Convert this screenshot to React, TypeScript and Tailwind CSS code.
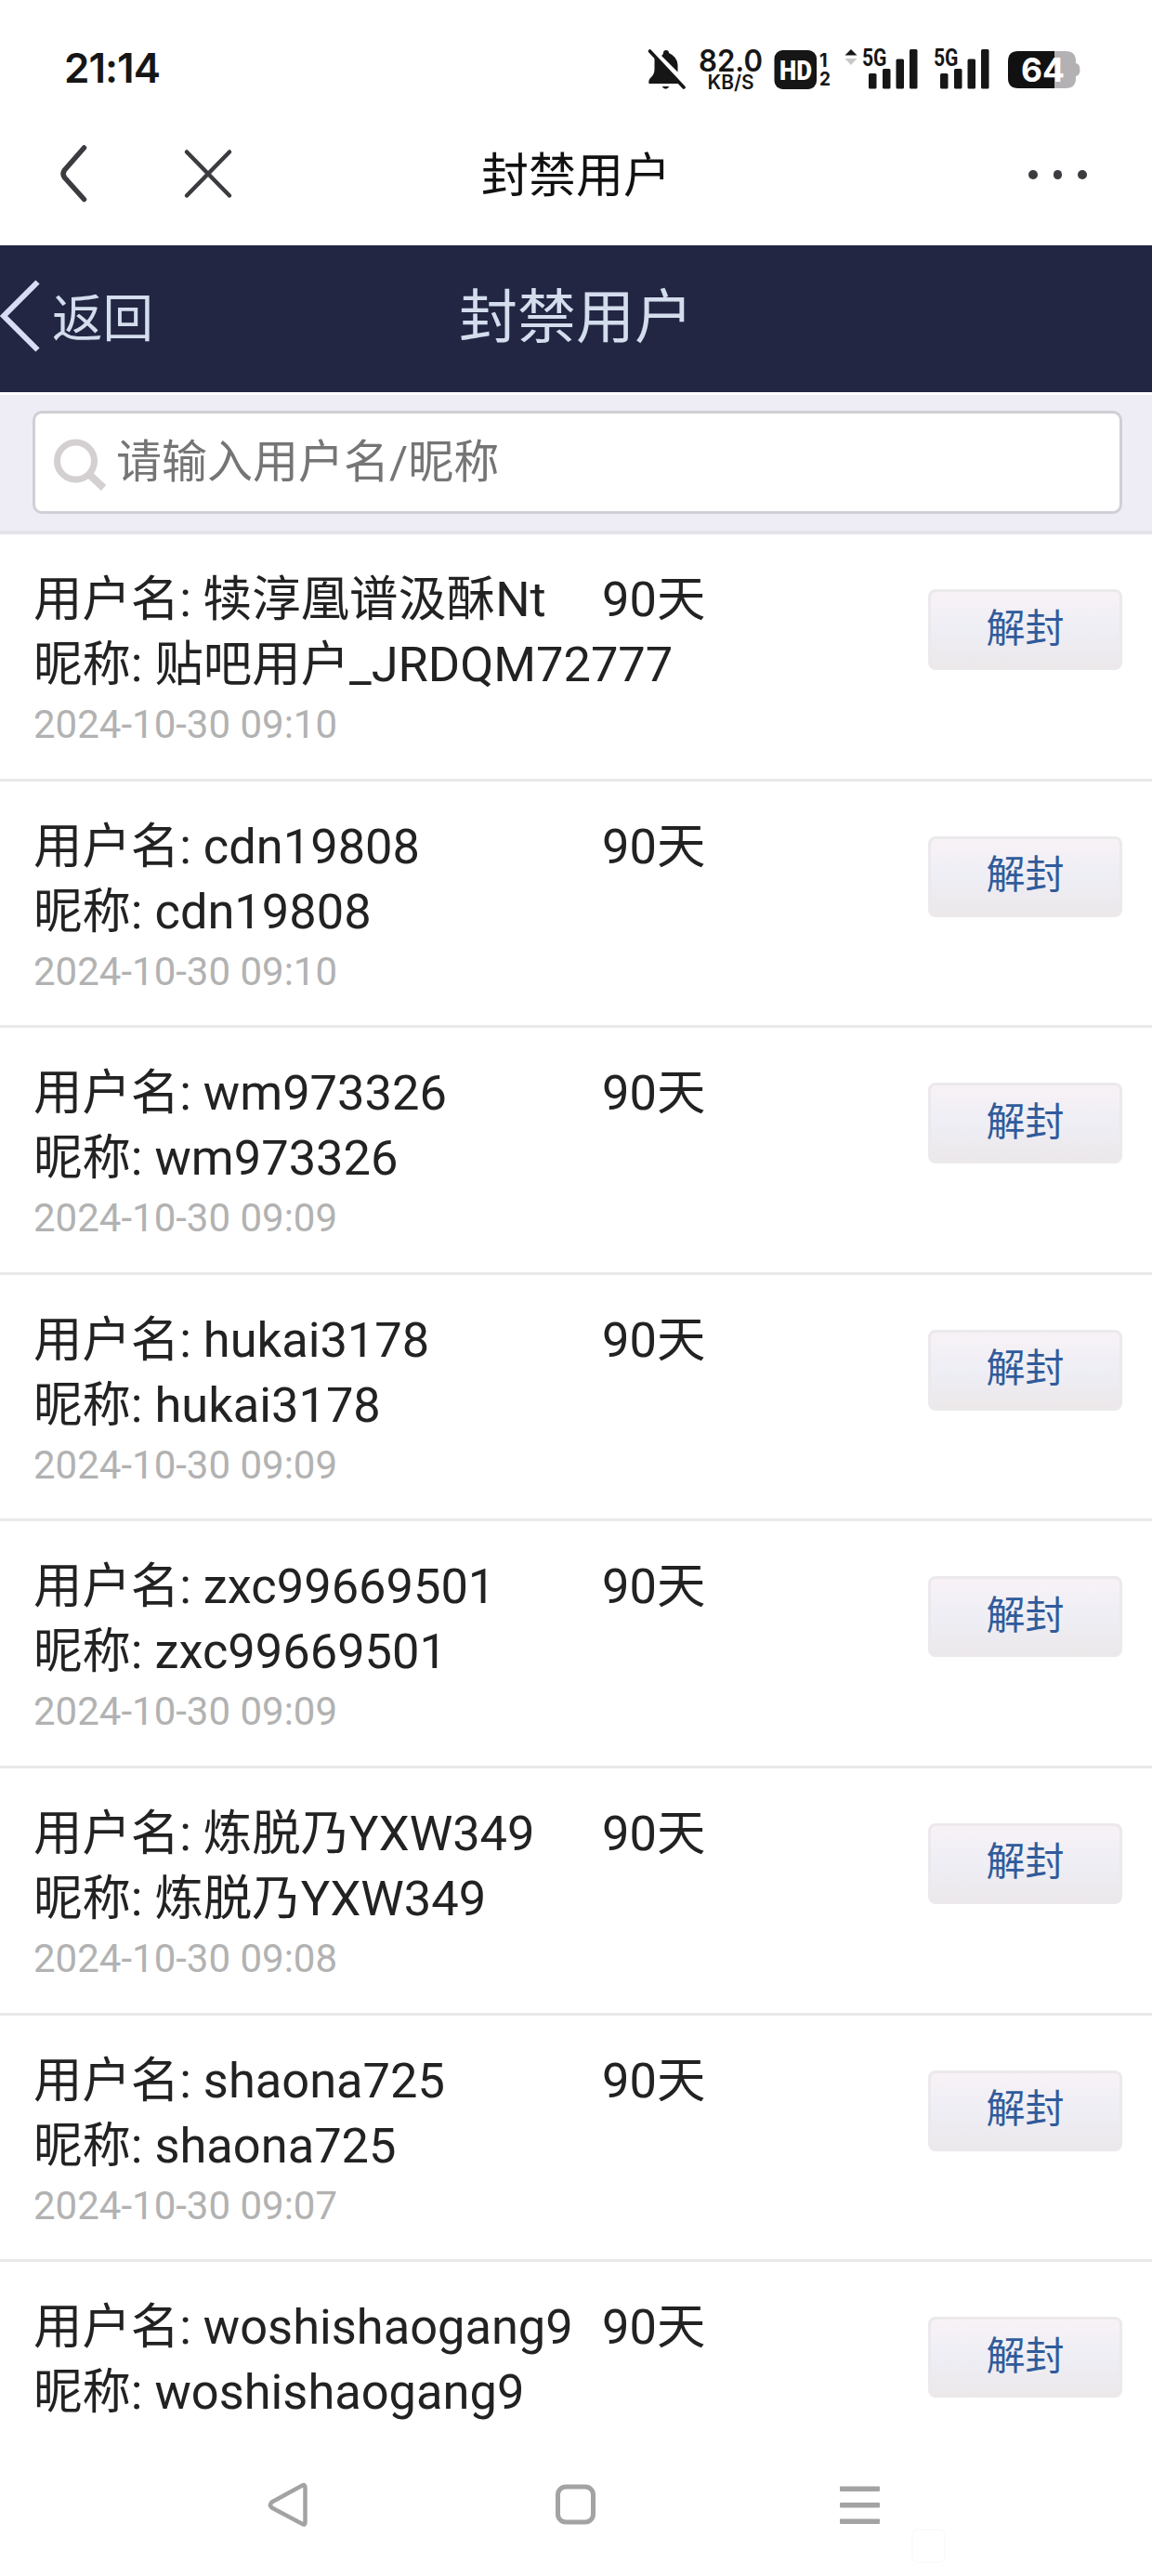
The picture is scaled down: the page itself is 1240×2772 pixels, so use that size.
const bannedUsers = [
  { username: "犊淳凰谱汲酥Nt", nickname: "贴吧用户_JRDQM72777", days: 90, time: "2024-10-30 09:10" },
  { username: "cdn19808", nickname: "cdn19808", days: 90, time: "2024-10-30 09:10" },
  { username: "wm973326", nickname: "wm973326", days: 90, time: "2024-10-30 09:09" },
  { username: "hukai3178", nickname: "hukai3178", days: 90, time: "2024-10-30 09:09" },
  { username: "zxc99669501", nickname: "zxc99669501", days: 90, time: "2024-10-30 09:09" },
  { username: "炼脱乃YXW349", nickname: "炼脱乃YXW349", days: 90, time: "2024-10-30 09:08" },
  { username: "shaona725", nickname: "shaona725", days: 90, time: "2024-10-30 09:07" },
  { username: "woshishaogang9", nickname: "woshishaogang9", days: 90, time: "" },
];

const BellOffIcon = () => (
  <svg className="h-[44px] w-[42px]" viewBox="0 0 42 44" fill="#161616">
    <path d="M7.500 8 L36 38 H1.500 Q0.500 34 4 31 Q7.500 28 7.500 22 Z" />
    <path d="M15 8 Q17 6.500 17 5 A3 3 0 0 1 23 5 Q32 9 32.500 18 V25.500 Z" />
    <path d="M15.500 41 H23.500 Q19.500 46.500 15.500 41 Z" />
    <path d="M2.500 3 L39 42" stroke="#161616" strokeWidth="3.600" strokeLinecap="round" />
  </svg>
);

const SignalIcon = ({ active }: { active?: boolean }) => (
  <svg className="h-[44px] w-[80px] overflow-visible" viewBox="0 0 80 44" fill="#161616">
    {active && (
      <>
        <path d="M8 1 L14.500 7.500 H1.500 Z" />
        <path d="M8 18 L14.500 11 H1.500 Z" fill="#c9c9c9" />
      </>
    )}
    <text
      x="20"
      y="18.500"
      fontSize="25"
      fontWeight="700"
      textLength="26.500"
      lengthAdjust="spacingAndGlyphs"
      className="font-['Roboto',sans-serif]"
    >
      5G
    </text>
    <rect x="27" y="27" width="8.500" height="16.500" rx="1.500" />
    <rect x="42" y="22" width="8.500" height="21.500" rx="1.500" />
    <rect x="56.500" y="11.500" width="8.500" height="32" rx="1.500" />
    <rect x="71" y="1" width="8.500" height="42.500" rx="1.500" />
  </svg>
);

const BatteryIcon = () => (
  <svg className="h-[40px] w-[78px] overflow-visible" viewBox="0 0 78 40">
    <path d="M50 0 H62 Q73 0 73 11 V13 Q77.500 14 77.500 20 Q77.500 26 73 27 V29 Q73 40 62 40 H50 Z" fill="#b4b1b4" />
    <path d="M50 0 H11 Q0 0 0 11 V29 Q0 40 11 40 H50 Z" fill="#111" />
    <text
      x="14"
      y="32.500"
      fontSize="36"
      fontWeight="700"
      fill="#fff"
      textLength="47"
      lengthAdjust="spacingAndGlyphs"
      className="font-['Inter',sans-serif]"
    >
      64
    </text>
  </svg>
);

const StatusBar = () => (
  <div className="flex h-[113px] items-end justify-between pr-[77px] pb-[17px] pl-[69px] text-[#161616]">
    <span className="font-['Inter',sans-serif] text-[44px] leading-[46px] font-semibold tracking-[-1px]">21:14</span>
    <div className="flex h-[44px] items-start">
      <BellOffIcon />
      <svg className="ml-[14px] h-[48px] w-[68px] overflow-visible" viewBox="0 0 68 48" fill="#161616">
        <text
          x="-1"
          y="24.500"
          fontSize="32"
          fontWeight="600"
          textLength="69"
          lengthAdjust="spacingAndGlyphs"
          className="font-['Inter',sans-serif]"
        >
          82.0
        </text>
        <text
          x="8.500"
          y="43.500"
          fontSize="21"
          fontWeight="600"
          textLength="50"
          lengthAdjust="spacingAndGlyphs"
          className="font-['Inter',sans-serif]"
        >
          KB/S
        </text>
      </svg>
      <svg className="ml-[12px] h-[44px] w-[62px] overflow-visible" viewBox="0 0 62 44" fill="#161616">
        <rect x="0.500" y="2" width="45.500" height="42" rx="9" />
        <text
          x="6"
          y="33.500"
          fontSize="29"
          fontWeight="900"
          fill="#fff"
          textLength="35"
          lengthAdjust="spacingAndGlyphs"
          className="font-['Roboto',sans-serif]"
        >
          HD
        </text>
        <text x="49" y="20" fontSize="20" fontWeight="700" className="font-['Inter',sans-serif]">
          1
        </text>
        <text
          x="49"
          y="40"
          fontSize="20"
          fontWeight="700"
          textLength="12"
          lengthAdjust="spacingAndGlyphs"
          className="font-['Inter',sans-serif]"
        >
          2
        </text>
      </svg>
      <div className="ml-[13px]">
        <SignalIcon active />
      </div>
      <div className="-ml-[3px]">
        <SignalIcon />
      </div>
      <div className="mt-[3px] ml-[20px]">
        <BatteryIcon />
      </div>
    </div>
  </div>
);

const AppBar = () => (
  <div className="flex h-[151px] items-start justify-between pr-[70px] pl-[62px]">
    <div className="flex w-[254px] items-center pt-[41px]">
      <svg className="h-[66px] w-[34px]" viewBox="0 0 34 66" fill="none" stroke="#3c3c40" strokeWidth="5.500" strokeLinecap="round">
        <path d="M28.500 5 L7.500 29 Q4.500 33 7.500 37 L28.500 60.500" />
      </svg>
      <svg className="ml-[100px] h-[56px] w-[56px]" viewBox="0 0 56 56" fill="none" stroke="#3c3c40" strokeWidth="4.500" strokeLinecap="round">
        <path d="M5 4.500 L51 51.500 M51 4.500 L5 51.500" />
      </svg>
    </div>
    <h1 className="mt-[40px] text-[51px] leading-[74px] text-[#111]">封禁用户</h1>
    <div className="flex w-[246px] justify-end gap-[17px] pt-[70px]">
      <span className="size-[9.5px] rounded-full bg-[#3c3c40]" />
      <span className="size-[9.5px] rounded-full bg-[#3c3c40]" />
      <span className="size-[9.5px] rounded-full bg-[#3c3c40]" />
    </div>
  </div>
);

const PageHeader = () => (
  <header className="flex h-[158px] items-center justify-between bg-[#222642] text-[#d3dded]">
    <div className="flex w-[300px] items-center">
      <svg className="mb-[6px] h-[78px] w-[45px]" viewBox="0 0 45 78" fill="none" stroke="#d8dcf4" strokeWidth="6">
        <path d="M40.500 2.500 L4 39 L40.500 75.500" />
      </svg>
      <span className="ml-[11px] text-[54.5px] leading-[60px]">返回</span>
    </div>
    <h2 className="pb-[3px] text-[63px] leading-[70px]">封禁用户</h2>
    <div className="w-[300px]" />
  </header>
);

const SearchBar = () => (
  <div className="mt-[3px] h-[150px] border-b-4 border-[#e4e3e9] bg-[#eeedf6] px-[35px] pt-[17px]">
    <div className="flex h-[111px] w-[1173px] items-center rounded-[10px] border-3 border-[#cfcfd5] bg-white pl-[20px]">
      <svg className="mt-[4px] h-[58px] w-[58px]" viewBox="0 0 58 58" fill="none" stroke="#d4d0d1">
        <circle cx="23.500" cy="25" r="20" strokeWidth="7" />
        <path d="M38 39.500 L53.500 54" strokeWidth="8" />
      </svg>
      <span className="ml-[9px] pt-[1px] text-[49px] leading-[60px] text-[#757575]">请输入用户名/昵称</span>
    </div>
  </div>
);

const UserRow = ({ user }: { user: (typeof bannedUsers)[number] }) => (
  <li className="flex h-[265.6px] shrink-0 items-start border-b-3 border-[#e9e9e9] pl-[36px] whitespace-nowrap">
    <div className="w-[612px] pt-[35px] text-[52.4px] leading-[70px] text-[#222]">
      <p>用户名: {user.username}</p>
      <p>昵称: {user.nickname}</p>
      <p className="text-[42px] leading-[60px] text-[#b2b2b2]">{user.time}</p>
    </div>
    <span className="w-[351px] pt-[35px] text-[52.4px] leading-[70px] text-[#222]">{user.days}天</span>
    <button className="mt-[59px] h-[87px] w-[209px] rounded-[8px] border-3 border-[#ebe9ec] bg-linear-to-b from-[#f8f2f6] via-[#eeeef5] to-[#ece8ea] pb-[2px] text-[42px] leading-[50px] text-[#315b9b]">
      解封
    </button>
  </li>
);

const NavBar = () => (
  <nav className="relative flex flex-1 items-start bg-white pt-[56px] pl-[286px]">
    <svg className="h-[50px] w-[50px]" viewBox="0 0 50 50" fill="none" stroke="#a3a3a3" strokeWidth="4.500" strokeLinejoin="round">
      <path d="M39.500 3.500 Q42.500 2 42.500 6 V43 Q42.500 47 39.500 45 L6.500 27.500 Q3.500 24.500 6.500 21.500 Z" />
    </svg>
    <svg className="ml-[261px] h-[50px] w-[46px]" viewBox="0 0 46 50" fill="none" stroke="#a3a3a3" strokeWidth="5">
      <rect x="3.500" y="5" width="38" height="38" rx="8.500" />
    </svg>
    <svg className="ml-[260px] h-[50px] w-[46px]" viewBox="0 0 46 50" fill="#a3a3a3">
      <rect x="1" y="4.500" width="43" height="5.500" rx="1" />
      <rect x="1" y="22" width="43" height="5.500" rx="1" />
      <rect x="1" y="39.500" width="43" height="5.500" rx="1" />
    </svg>
    <div className="absolute top-[106px] left-[981px] size-[37px] rounded-[7px] border-2 border-[#fbfbfb]" />
  </nav>
);

const App = () => {
  return (
    <div className="flex h-[2772px] w-[1240px] flex-col overflow-hidden bg-white font-['Roboto','Noto_Sans_CJK_SC',sans-serif]">
      <StatusBar />
      <AppBar />
      <PageHeader />
      <SearchBar />
      <ul className="flex h-[2040px] flex-col overflow-hidden">
        {bannedUsers.map((user) => (
          <UserRow key={user.username} user={user} />
        ))}
      </ul>
      <NavBar />
    </div>
  );
};

export default App;
